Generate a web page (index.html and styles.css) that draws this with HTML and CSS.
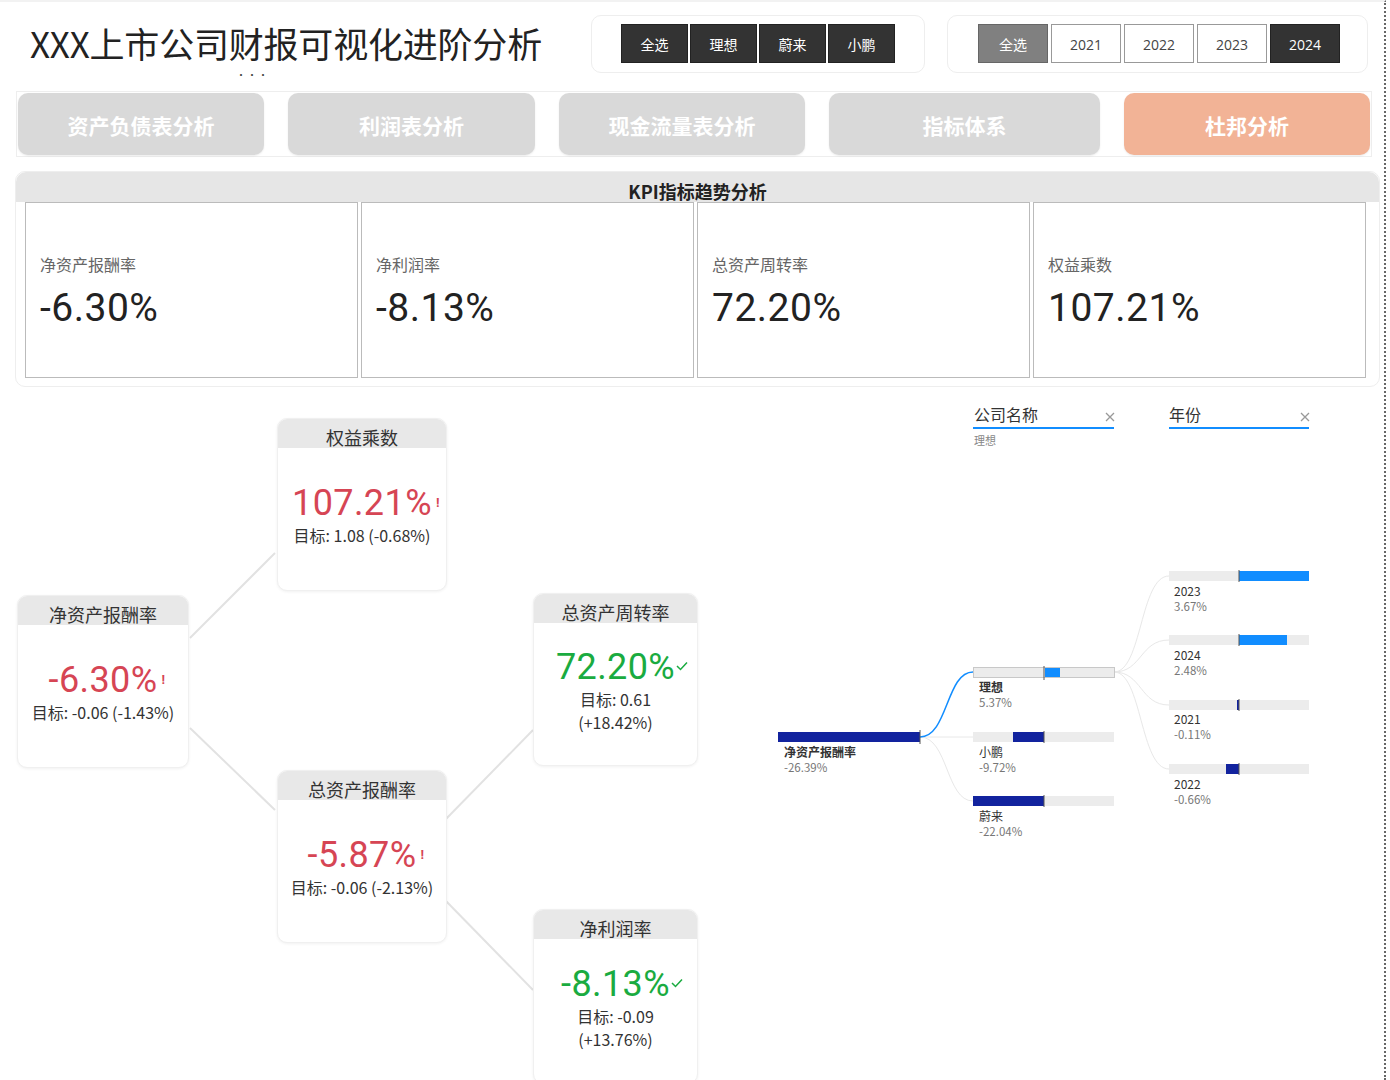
FILE: index.html
```html
<!DOCTYPE html>
<html lang="zh-CN">
<head>
  <meta charset="UTF-8" />
  <title>XXX上市公司财报可视化进阶分析</title>
  <link rel="stylesheet" href="styles.css">
</head>
<body>
<div class="page">

  <!-- Title and slicers -->
  <div class="topbar">
    <div class="title-wrap">
      <h1>XXX上市公司财报可视化进阶分析</h1>
      <div class="dots">•••</div>
    </div>
    <div class="slicer slicer-company">
      <span class="chip dark">全选</span>
      <span class="chip dark">理想</span>
      <span class="chip dark">蔚来</span>
      <span class="chip dark">小鹏</span>
    </div>
    <div class="slicer slicer-year">
      <span class="chip grey">全选</span>
      <span class="chip light">2021</span>
      <span class="chip light">2022</span>
      <span class="chip light">2023</span>
      <span class="chip dark">2024</span>
    </div>
  </div>

  <!-- Page tabs -->
  <nav class="tabs">
    <a class="tab w246">资产负债表分析</a>
    <a class="tab w247">利润表分析</a>
    <a class="tab w246">现金流量表分析</a>
    <a class="tab w271">指标体系</a>
    <a class="tab w246 active">杜邦分析</a>
  </nav>

  <!-- KPI cards -->
  <section class="kpi">
    <div class="kpi-head">KPI指标趋势分析</div>
    <div class="kpi-row">
      <div class="kpi-card"><p class="kpi-label">净资产报酬率</p><p class="kpi-value">-6.30%</p></div>
      <div class="kpi-card"><p class="kpi-label">净利润率</p><p class="kpi-value">-8.13%</p></div>
      <div class="kpi-card"><p class="kpi-label">总资产周转率</p><p class="kpi-value">72.20%</p></div>
      <div class="kpi-card"><p class="kpi-label">权益乘数</p><p class="kpi-value">107.21%</p></div>
    </div>
  </section>

  <!-- Dupont tree + decomposition tree -->
  <div class="canvas">
    <svg class="links" width="760" height="693">
      <line x1="190" y1="251" x2="275" y2="166" />
      <line x1="190" y1="341" x2="275" y2="423" />
      <line x1="445" y1="433" x2="533" y2="343" />
      <line x1="445" y1="513" x2="533" y2="603" />
    </svg>

    <div class="node node-a">
      <div class="node-head">权益乘数</div>
      <div class="node-body">
        <div class="node-value bad">107.21%<span class="mark">!</span></div>
        <div class="node-sub">目标: 1.08 (-0.68%)</div>
      </div>
    </div>

    <div class="node node-b">
      <div class="node-head">净资产报酬率</div>
      <div class="node-body">
        <div class="node-value bad">-6.30%<span class="mark">!</span></div>
        <div class="node-sub">目标: -0.06 (-1.43%)</div>
      </div>
    </div>

    <div class="node node-c">
      <div class="node-head">总资产周转率</div>
      <div class="node-body">
        <div class="node-value good">72.20%<svg class="check" width="12" height="10" viewBox="0 0 12 10"><path d="M1 5 L4.5 8.5 L11 1.5" /></svg></div>
        <div class="node-sub">目标: 0.61</div>
        <div class="node-sub">(+18.42%)</div>
      </div>
    </div>

    <div class="node node-d">
      <div class="node-head">总资产报酬率</div>
      <div class="node-body">
        <div class="node-value bad">-5.87%<span class="mark">!</span></div>
        <div class="node-sub">目标: -0.06 (-2.13%)</div>
      </div>
    </div>

    <div class="node node-e">
      <div class="node-head">净利润率</div>
      <div class="node-body">
        <div class="node-value good">-8.13%<svg class="check" width="12" height="10" viewBox="0 0 12 10"><path d="M1 5 L4.5 8.5 L11 1.5" /></svg></div>
        <div class="node-sub">目标: -0.09</div>
        <div class="node-sub">(+13.76%)</div>
      </div>
    </div>

    <svg class="decomp" width="580" height="450" viewBox="0 0 580 450">
      <!-- level headers -->
      <text class="lvl" x="214" y="21">公司名称</text>
      <line class="lvl-line" x1="213" y1="28" x2="354" y2="28" />
      <path class="close" d="M346 13 L354 21 M354 13 L346 21" />
      <text class="lvl-sel" x="214" y="45">理想</text>

      <text class="lvl" x="409" y="21">年份</text>
      <line class="lvl-line" x1="409" y1="28" x2="549" y2="28" />
      <path class="close" d="M541 13 L549 21 M549 13 L541 21" />

      <!-- connectors -->
      <path class="conn" d="M160 337 L213 337" />
      <path class="conn" d="M160 337 C188 337 186 401 213 401" />
      <path class="conn-on" d="M160 337 C188 337 186 272 213 272" />
      <path class="conn" d="M354 272 C382 272 380 176 409 176" />
      <path class="conn" d="M354 272 C382 272 380 240 409 240" />
      <path class="conn" d="M354 272 C382 272 380 305 409 305" />
      <path class="conn" d="M354 272 C382 272 380 369 409 369" />

      <!-- root -->
      <rect class="neg" x="18" y="332" width="142" height="10" />
      <line class="tick" x1="160" y1="330" x2="160" y2="344" />
      <text class="bar-name" x="24" y="357">净资产报酬率</text>
      <text class="bar-num" x="24" y="372">-26.39%</text>

      <!-- companies -->
      <rect class="track sel" x="213.5" y="267.5" width="141" height="10" />
      <rect class="pos" x="285" y="268" width="15" height="9" />
      <line class="tick" x1="284" y1="266" x2="284" y2="280" />
      <text class="bar-name" x="219" y="292">理想</text>
      <text class="bar-num" x="219" y="307">5.37%</text>

      <rect class="track" x="213" y="332" width="141" height="10" />
      <rect class="neg" x="253" y="332" width="31" height="10" />
      <line class="tick" x1="284" y1="331" x2="284" y2="343" />
      <text class="bar-name light" x="219" y="357">小鹏</text>
      <text class="bar-num" x="219" y="372">-9.72%</text>

      <rect class="track" x="213" y="396" width="141" height="10" />
      <rect class="neg" x="213" y="396" width="71" height="10" />
      <line class="tick" x1="284" y1="395" x2="284" y2="407" />
      <text class="bar-name light" x="219" y="421">蔚来</text>
      <text class="bar-num" x="219" y="436">-22.04%</text>

      <!-- years -->
      <rect class="track" x="409" y="171" width="140" height="10" />
      <rect class="pos" x="479" y="171" width="70" height="10" />
      <line class="tick" x1="479" y1="170" x2="479" y2="182" />
      <text class="bar-name light" x="414" y="196">2023</text>
      <text class="bar-num" x="414" y="211">3.67%</text>

      <rect class="track" x="409" y="235" width="140" height="10" />
      <rect class="pos" x="479" y="235" width="48" height="10" />
      <line class="tick" x1="479" y1="234" x2="479" y2="246" />
      <text class="bar-name light" x="414" y="260">2024</text>
      <text class="bar-num" x="414" y="275">2.48%</text>

      <rect class="track" x="409" y="300" width="140" height="10" />
      <rect class="neg" x="477" y="300" width="2" height="10" />
      <line class="tick" x1="479" y1="299" x2="479" y2="311" />
      <text class="bar-name light" x="414" y="324">2021</text>
      <text class="bar-num" x="414" y="339">-0.11%</text>

      <rect class="track" x="409" y="364" width="140" height="10" />
      <rect class="neg" x="466" y="364" width="13" height="10" />
      <line class="tick" x1="479" y1="363" x2="479" y2="375" />
      <text class="bar-name light" x="414" y="389">2022</text>
      <text class="bar-num" x="414" y="404">-0.66%</text>
    </svg>
  </div>

</div>
</body>
</html>
```

FILE: styles.css
```css
body {
  margin: 0;
  background: #fff;
  color: #252423;
  font-family: "Noto Sans CJK SC", "Noto Sans", sans-serif;
}

.page {
  width: 1386px;
  height: 1080px;
  border-right: 2px dotted #666;
  border-top: 2px solid #f2f2f2;
  box-sizing: border-box;
  overflow: hidden;
}

/* top bar */
.topbar {
  display: flex;
  align-items: flex-start;
  height: 89px;
  padding-top: 13px;
  box-sizing: border-box;
}

.title-wrap {
  width: 561px;
  padding-left: 30px;
}

.title-wrap h1 {
  margin: 8px 0 0;
  font-size: 35px;
  font-weight: 400;
  line-height: 40px;
  color: #222;
  letter-spacing: -0.2px;
}

.dots {
  margin: 7px 0 0 206px;
  font-size: 10px;
  letter-spacing: 1px;
  line-height: 10px;
  color: #444;
}

.slicer {
  display: flex;
  border: 1px solid #eee;
  border-radius: 10px;
  height: 58px;
  box-sizing: border-box;
  padding-top: 8px;
}

.slicer-company {
  width: 334px;
  padding-left: 29px;
  gap: 2px;
}

.slicer-year {
  width: 421px;
  margin-left: 22px;
  padding-left: 30px;
  gap: 3px;
}

.chip {
  height: 39px;
  line-height: 39px;
  text-align: center;
  font-size: 14px;
  box-sizing: border-box;
}

.slicer-company .chip {
  width: 67px;
}

.slicer-year .chip {
  width: 70px;
  font-family: "Open Sans", "Noto Sans CJK SC", sans-serif;
}

.chip.dark {
  background: #333;
  color: #fff;
  border: 1px solid #222;
}

.chip.grey {
  background: #808080;
  color: #fff;
  border: 1px solid #666;
  font-family: "Noto Sans CJK SC", sans-serif;
}

.chip.light {
  background: #fff;
  color: #444;
  border: 1px solid #999;
}

/* tabs */
.tabs {
  display: flex;
  gap: 24px;
  margin-left: 16px;
  width: 1356px;
  height: 66px;
  padding: 1px;
  border: 1px solid #eee;
  box-sizing: border-box;
}

.tab {
  height: 62px;
  line-height: 64px;
  border-radius: 10px;
  background: #d9d9d9;
  color: #fff;
  font-size: 21px;
  font-weight: bold;
  text-align: center;
  cursor: pointer;
  box-shadow: 0 1px 2px rgba(0,0,0,0.08);
}

.tab.active {
  background: #f2b396;
}

.w246 { width: 246px; }
.w247 { width: 247px; }
.w271 { width: 271px; }

/* KPI section */
.kpi {
  margin: 14px 0 0 15px;
  width: 1365px;
  height: 216px;
  border: 1px solid #eee;
  border-radius: 10px;
  box-sizing: border-box;
}

.kpi-head {
  height: 30px;
  background: #e6e6e6;
  border-radius: 10px 10px 0 0;
  text-align: center;
  font-size: 18px;
  font-weight: bold;
  line-height: 20px;
  padding-top: 9px;
  box-sizing: border-box;
  color: #222;
}

.kpi-row {
  display: flex;
  gap: 3px;
  padding-left: 9px;
}

.kpi-card {
  width: 333px;
  height: 176px;
  border: 1px solid #bbb;
  box-sizing: border-box;
  padding: 50px 0 0 14px;
}

.kpi-card p {
  margin: 0;
}

.kpi-label {
  font-size: 16px;
  line-height: 22px;
  color: #666;
}

.kpi-value {
  margin-top: 10px !important;
  font-family: "Roboto", sans-serif;
  font-size: 39px;
  line-height: 46px;
  color: #222;
  letter-spacing: 0.5px;
}

/* bottom canvas */
.canvas {
  position: relative;
  height: 691px;
}

.links {
  position: absolute;
  left: 0;
  top: 0;
}

.links line {
  stroke: #e2e2e2;
  stroke-width: 2;
}

.node {
  position: absolute;
  width: 170px;
  height: 173px;
  border: 1px solid #f0f0f0;
  border-radius: 10px;
  background: #fff;
  box-shadow: 0 1px 3px rgba(0,0,0,0.06);
  box-sizing: border-box;
  display: flex;
  flex-direction: column;
  overflow: hidden;
}

.node-a { left: 277px; top: 31px; }
.node-b { left: 17px; top: 208px; width: 172px; }
.node-c { left: 533px; top: 206px; width: 165px; }
.node-d { left: 277px; top: 383px; }
.node-e { left: 533px; top: 522px; width: 165px; height: 175px; }

.node-head {
  height: 29px;
  background: #e8e8e8;
  text-align: center;
  font-size: 18px;
  line-height: 22px;
  padding-top: 7px;
  box-sizing: border-box;
  color: #333;
}

.node-body {
  flex: 1;
  display: flex;
  flex-direction: column;
  justify-content: center;
  align-items: center;
  padding-bottom: 9px;
}

.node-value {
  font-family: "Roboto", sans-serif;
  font-size: 36px;
  line-height: 42px;
  letter-spacing: 0.4px;
  white-space: nowrap;
  position: relative;
}

.node-value.bad { color: #d64554; }
.node-value.good { color: #1aab40; }

.mark {
  position: absolute;
  right: -8px;
  top: 14px;
  font-size: 13px;
  line-height: 14px;
  font-weight: bold;
}

.check {
  position: absolute;
  right: -13px;
  top: 15px;
}

.check path {
  fill: none;
  stroke: #1aab40;
  stroke-width: 1.5;
}

.node-sub {
  font-size: 16px;
  line-height: 23px;
  color: #333;
  white-space: nowrap;
}

/* decomposition tree */
.decomp {
  position: absolute;
  left: 760px;
  top: 13px;
  font-family: "Noto Sans CJK SC", "Noto Sans", sans-serif;
}

.decomp .lvl {
  font-size: 16px;
  fill: #333;
}

.decomp .lvl-line {
  stroke: #118dff;
  stroke-width: 2;
}

.decomp .close {
  stroke: #999;
  stroke-width: 1.3;
  fill: none;
}

.decomp .lvl-sel {
  font-size: 11px;
  fill: #888;
}

.decomp .conn {
  fill: none;
  stroke: #e8e8e8;
  stroke-width: 1;
}

.decomp .conn-on {
  fill: none;
  stroke: #118dff;
  stroke-width: 1.5;
}

.decomp .track {
  fill: #ececec;
}

.decomp .track.sel {
  stroke: #c8c8c8;
  stroke-width: 1;
}

.decomp .pos { fill: #118dff; }
.decomp .neg { fill: #12239e; }

.decomp .tick {
  stroke: #555;
  stroke-width: 1;
}

.decomp .bar-name {
  font-size: 12px;
  font-weight: bold;
  fill: #333;
}

.decomp .bar-name.light {
  font-weight: 400;
}

.decomp .bar-num {
  font-size: 11.5px;
  fill: #777;
}
```
